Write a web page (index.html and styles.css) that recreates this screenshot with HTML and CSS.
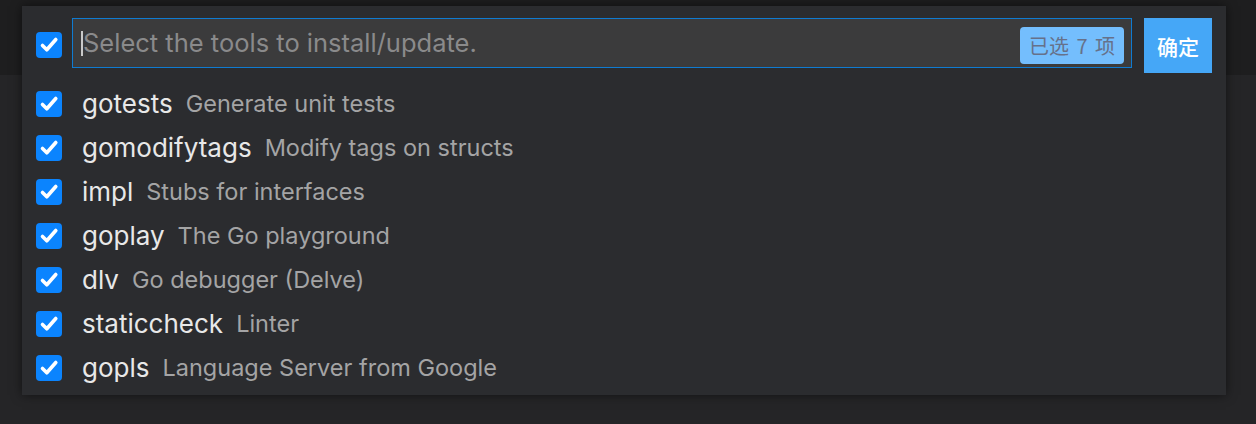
FILE: index.html
```html
<!DOCTYPE html>
<html lang="en">
<head>
<meta charset="utf-8">
<title>Select tools</title>
<link rel="stylesheet" href="styles.css">
</head>
<body>
<div class="panel">
  <div class="header">
    <span class="cb"><svg viewBox="0 0 26 26" width="26" height="26"><path d="M6.5 13.5 L10.8 17.8 L19.8 7.5" fill="none" stroke="#fff" stroke-width="3.6" stroke-linecap="round" stroke-linejoin="round"/></svg></span>
    <div class="input">
      <span class="caret"></span>
      <span class="placeholder">Select the tools to install/update.</span>
      <span class="badge">已选 7 项</span>
    </div>
    <button class="ok">确定</button>
  </div>
  <ul class="list">
    <li class="row"><span class="cb"><svg viewBox="0 0 26 26" width="26" height="26"><path d="M6.5 13.5 L10.8 17.8 L19.8 7.5" fill="none" stroke="#fff" stroke-width="3.6" stroke-linecap="round" stroke-linejoin="round"/></svg></span><span class="name">gotests</span><span class="desc">Generate unit tests</span></li>
    <li class="row"><span class="cb"><svg viewBox="0 0 26 26" width="26" height="26"><path d="M6.5 13.5 L10.8 17.8 L19.8 7.5" fill="none" stroke="#fff" stroke-width="3.6" stroke-linecap="round" stroke-linejoin="round"/></svg></span><span class="name">gomodifytags</span><span class="desc">Modify tags on structs</span></li>
    <li class="row"><span class="cb"><svg viewBox="0 0 26 26" width="26" height="26"><path d="M6.5 13.5 L10.8 17.8 L19.8 7.5" fill="none" stroke="#fff" stroke-width="3.6" stroke-linecap="round" stroke-linejoin="round"/></svg></span><span class="name">impl</span><span class="desc">Stubs for interfaces</span></li>
    <li class="row"><span class="cb"><svg viewBox="0 0 26 26" width="26" height="26"><path d="M6.5 13.5 L10.8 17.8 L19.8 7.5" fill="none" stroke="#fff" stroke-width="3.6" stroke-linecap="round" stroke-linejoin="round"/></svg></span><span class="name">goplay</span><span class="desc">The Go playground</span></li>
    <li class="row"><span class="cb"><svg viewBox="0 0 26 26" width="26" height="26"><path d="M6.5 13.5 L10.8 17.8 L19.8 7.5" fill="none" stroke="#fff" stroke-width="3.6" stroke-linecap="round" stroke-linejoin="round"/></svg></span><span class="name">dlv</span><span class="desc">Go debugger (Delve)</span></li>
    <li class="row"><span class="cb"><svg viewBox="0 0 26 26" width="26" height="26"><path d="M6.5 13.5 L10.8 17.8 L19.8 7.5" fill="none" stroke="#fff" stroke-width="3.6" stroke-linecap="round" stroke-linejoin="round"/></svg></span><span class="name">staticcheck</span><span class="desc">Linter</span></li>
    <li class="row"><span class="cb"><svg viewBox="0 0 26 26" width="26" height="26"><path d="M6.5 13.5 L10.8 17.8 L19.8 7.5" fill="none" stroke="#fff" stroke-width="3.6" stroke-linecap="round" stroke-linejoin="round"/></svg></span><span class="name">gopls</span><span class="desc">Language Server from Google</span></li>
  </ul>
</div>
</body>
</html>
```

FILE: styles.css
```css
* { box-sizing: border-box; }
html, body { margin: 0; padding: 0; }
body {
  width: 1256px;
  height: 424px;
  overflow: hidden;
  background: linear-gradient(#1e1e1f 0, #1e1e1f 75px, #252527 75px, #252527 100%);
  font-family: Inter, "Noto Sans CJK SC", sans-serif;
  padding-top: 6px;
  padding-left: 22px;
}
.panel {
  width: 1204px;
  height: 389px;
  background: #2b2c2f;
  box-shadow: 0 0 10px rgba(0, 0, 0, 0.55);
}
.header {
  display: flex;
  align-items: flex-start;
  padding: 12px 14px 0 14px;
  height: 76px;
}
.cb {
  flex: none;
  width: 26px;
  height: 26px;
  border-radius: 4px;
  background: #0b84fe;
  display: flex;
}
.header .cb { margin-top: 14px; }
.input {
  flex: none;
  width: 1060px;
  height: 50px;
  margin-left: 10px;
  border: 1.5px solid #0f7bd1;
  background: #3b3b3c;
  display: flex;
  align-items: center;
  padding-left: 8px;
  padding-right: 7px;
  position: relative;
}
.caret {
  width: 2px;
  height: 25px;
  background: #c9c9c9;
}
.placeholder {
  flex: 1;
  color: #8a8a8b;
  font-size: 25.5px;
  line-height: 30px;
}
.badge {
  margin-top: 5px;
  height: 37px;
  padding: 0 9px;
  background: #74befd;
  border-radius: 4px;
  color: #66718a;
  font-size: 20px;
  word-spacing: 3px;
  display: flex;
  align-items: center;
  font-family: "Noto Sans CJK SC", sans-serif;
}
.ok {
  flex: none;
  margin-left: 12px;
  width: 68px;
  height: 55px;
  border: none;
  background: #45a7f7;
  color: #fff;
  font-size: 21px;
  font-weight: 500;
  font-family: "Noto Sans CJK SC", sans-serif;
  padding: 0;
}
.list {
  list-style: none;
  margin: 0;
  padding: 0 0 0 14px;
}
.row {
  display: flex;
  align-items: center;
  height: 44px;
}
.name {
  margin-left: 20px;
  color: #e8e8e8;
  font-size: 26px;
  line-height: 30px;
}
.desc {
  margin-left: 13px;
  color: #a4a4a5;
  font-size: 23.5px;
  line-height: 30px;
}
```
